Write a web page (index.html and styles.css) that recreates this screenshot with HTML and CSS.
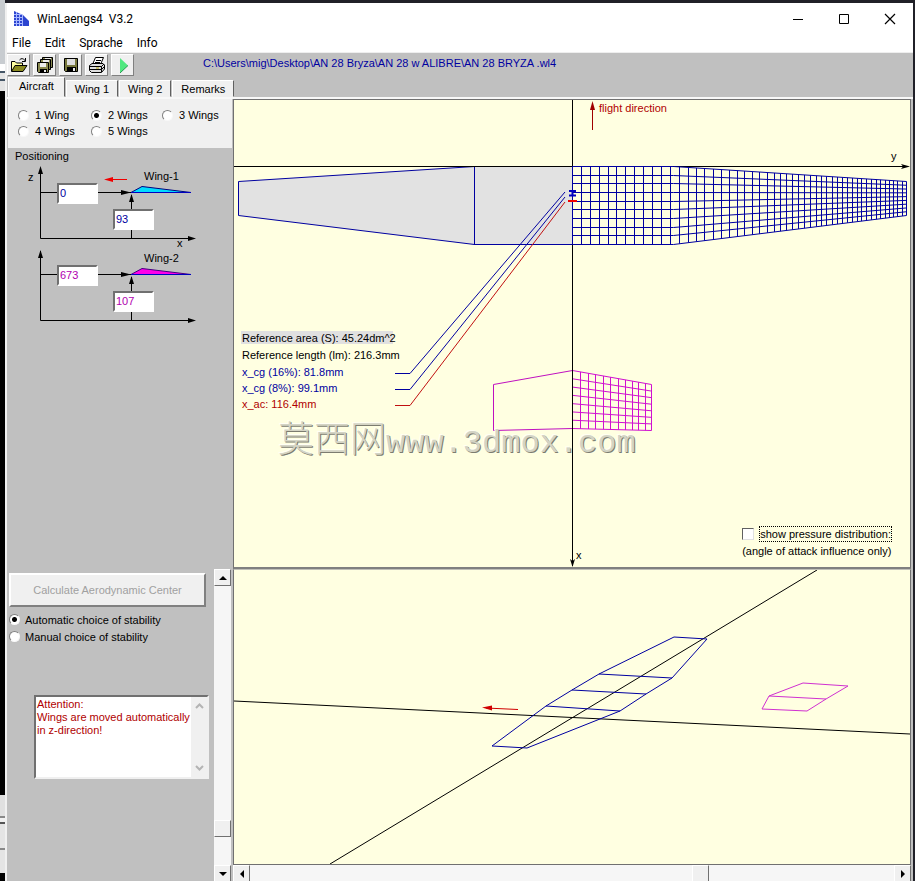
FILE: index.html
```html
<!DOCTYPE html>
<html lang="en">
<head>
<meta charset="utf-8">
<title>WinLaengs4 V3.2</title>
<link rel="stylesheet" href="styles.css">
</head>
<body>
<div class="desktop">
<div class="window">
  <header class="titlebar">
    <svg class="app-icon" width="17" height="16" viewBox="0 0 17 16">
      <clipPath id="wing-shape"><path d="M1 0L10 4L16 10V15H1Z"/></clipPath>
      <g clip-path="url(#wing-shape)" shape-rendering="crispEdges">
        <path d="M0 0H17V16H0Z" fill="#2c44d0"/>
        <path d="M3.500 0V16M6.500 0V16M9.500 0V16M0 3.500H9M0 6.500H10M0 9.500H10M0 12.500H10" stroke="#a8b8ff"/>
      </g>
    </svg>
    <h1>WinLaengs4&nbsp; V3.2</h1>
    <div class="window-buttons">
      <button type="button" aria-label="Minimize"><svg width="12" height="12" viewBox="0 0 12 12"><path d="M1 6.500H11" stroke="#000"/></svg></button>
      <button type="button" aria-label="Maximize"><svg width="12" height="12" viewBox="0 0 12 12"><path d="M1.500 1.500H10.500V10.500H1.500Z" fill="none" stroke="#000"/></svg></button>
      <button type="button" aria-label="Close"><svg width="12" height="12" viewBox="0 0 12 12"><path d="M1 1L11 11M11 1L1 11" stroke="#000" stroke-width="1.200"/></svg></button>
    </div>
  </header>
  <nav class="menubar">
    <button type="button">File</button>
    <button type="button">Edit</button>
    <button type="button">Sprache</button>
    <button type="button">Info</button>
  </nav>
  <div class="toolbar">
    <button type="button" aria-label="Open"><svg width="18" height="18" viewBox="0 0 18 18"><path d="M1.500 15V5.500H5L6.500 7H12.500V9.500" fill="#ffffa0" stroke="#000"/><path d="M1.500 15.500L5 9.500H17L13 15.500Z" fill="#8a8a20" stroke="#000"/><path d="M9.500 4Q12 1 15 4.500M15.500 2V5.500H12" fill="none" stroke="#000"/></svg></button>
    <button type="button" aria-label="Save all"><svg width="18" height="18" viewBox="0 0 18 18"><path d="M6.500 1.500H16.500V11.500H6.500Z" fill="#8a8a50" stroke="#000"/><path d="M9 2H15V5H9Z" fill="#eee"/><path d="M4.500 3.500H14.500V13.500H4.500Z" fill="#8a8a50" stroke="#000"/><path d="M7 4H13V7H7Z" fill="#eee"/><path d="M1.500 6.500H12.500V16.500H2.500L1.500 15.500Z" fill="#8a8a50" stroke="#000"/><path d="M4 7H10V11H4Z" fill="#eee"/><path d="M4 13H11V16H4Z"/><path d="M8 14H10V16H8Z" fill="#eee"/></svg></button>
    <button type="button" aria-label="Save"><svg width="18" height="18" viewBox="0 0 18 18"><path d="M2.500 2.500H15.500V15.500H3.500L2.500 14.500Z" fill="#77773c" stroke="#000"/><path d="M5 3H13V9H5Z" fill="#ddd"/><path d="M5 11H14V15H5Z"/><path d="M11 12H13V15H11Z" fill="#eee"/></svg></button>
    <button type="button" aria-label="Print"><svg width="18" height="18" viewBox="0 0 18 18"><path d="M4.500 8.500L7.500 1.500H15.500L12.500 8.500Z" fill="#fff" stroke="#000"/><path d="M8 4.500H13M7 6.500H12" stroke="#000"/><path d="M1.500 9.500L4 7.500H15L16.500 9V13L13.500 16.500H3.500L1.500 14.500Z" fill="#ddd" stroke="#000"/><path d="M2 10.500H13.500L16 8M2 13.500H13.500V16M13.500 10.500V13.500L16 11" fill="none" stroke="#000"/><path d="M8 12H11" stroke="#b0a000"/></svg></button>
    <button type="button" aria-label="Run"><svg width="18" height="18" viewBox="0 0 18 18"><path d="M6 2V17L14 9.500Z" fill="#50e880"/><path d="M6 17L14 9.500" stroke="#289850"/></svg></button>
    <p class="file-path">C:\Users\mig\Desktop\AN 28 Bryza\AN 28 w ALIBRE\AN 28 BRYZA .wl4</p>
  </div>
  <div class="tabs" role="tablist">
    <button type="button" role="tab" aria-selected="true" class="active">Aircraft</button>
    <button type="button" role="tab" aria-selected="false">Wing 1</button>
    <button type="button" role="tab" aria-selected="false">Wing 2</button>
    <button type="button" role="tab" aria-selected="false">Remarks</button>
  </div>

  <main class="workspace">
    <section class="aircraft">
      <div class="wing-count">
        <label><input type="radio" name="wings">1 Wing</label>
        <label><input type="radio" name="wings" checked>2 Wings</label>
        <label><input type="radio" name="wings">3 Wings</label>
        <label><input type="radio" name="wings">4 Wings</label>
        <label><input type="radio" name="wings">5 Wings</label>
      </div>
      <h2>Positioning</h2>
      <div class="diagram first">
        <svg width="200" height="82" viewBox="8 165 200 82">
          <path d="M40.500 169V238.500H194M40.500 192.500H131M131.500 195V238" fill="none" stroke="#000"/>
          <path d="M40.500 166L43 174H38ZM196 238.500L188 236V241ZM131 192.500L121 190V195ZM131.500 194L134 202H129Z"/>
          <path d="M131 192.500L142 186.500L191 192.500Z" fill="#00dcff" stroke="#000080"/>
          <path d="M131 192.500H191" stroke="#0000c0"/>
          <path d="M110 179.500H127" stroke="#f00000"/><path d="M104 179.500L113 177V182Z" fill="#f00000"/>
          <text x="28" y="181">z</text><text x="144" y="180">Wing-1</text><text x="177" y="247">x</text>
        </svg>
        <input class="pos-x" type="text" value="0" aria-label="Wing-1 x position">
        <input class="pos-z" type="text" value="93" aria-label="Wing-1 z position">
      </div>
      <div class="diagram second">
        <svg width="200" height="82" viewBox="8 165 200 82">
          <path d="M40.500 169V238.500H194M40.500 192.500H131M131.500 195V238" fill="none" stroke="#000"/>
          <path d="M40.500 168L43 176H38ZM196 238.500L188 236V241ZM131 192.500L121 190V195ZM131.500 194L134 202H129Z"/>
          <path d="M131 192.500L142 186.500L191 192.500Z" fill="#ff00e8" stroke="#400080"/>
          <path d="M131 192.500H191" stroke="#0000c0"/>
          <text x="144" y="180">Wing-2</text>
        </svg>
        <input class="pos-x" type="text" value="673" aria-label="Wing-2 x position">
        <input class="pos-z" type="text" value="107" aria-label="Wing-2 z position">
      </div>
    </section>

    <section class="plot plan-view">
      <svg viewBox="234 100 676 467">
        <path d="M238.500 181.500L474.500 166.500H572.500V244.500H474.500L238.500 215.500Z" fill="#e2e2e2" stroke="#0000a0"/>
        <path d="M474.500 166V245" stroke="#0000a0"/>
        <path d="M234 166.500H908M572.500 100V566" stroke="#000"/>
        <path d="M910 166.500L901 164L903 166.500L901 169ZM572.500 567L570 559L572.500 561L575 559Z"/>
        <path id="main-mesh" fill="none" stroke="#0000a0"/>
        <path d="M572.500 370.500L493.500 384.500V430.500L572.500 428.500" fill="none" stroke="#c010c0"/>
        <path id="tail-mesh" fill="none" stroke="#d010d0"/>
        <path d="M572.500 370V430" stroke="#000"/>
        <path d="M395 373.500H410L565 192M395 389.500H410L565 197" fill="none" stroke="#0000a0"/>
        <path d="M395 405.500H410L565 202" fill="none" stroke="#c01010"/>
        <path d="M569 191H576M569 195.500H576M572.500 191V196" stroke="#0000c0" stroke-width="2"/>
        <path d="M568 201H577" stroke="#f00000" stroke-width="2"/>
        <path d="M592.500 104V130" stroke="#a00000"/><path d="M592.500 101L595 110H590Z" fill="#a00000"/>
        <text x="599" y="112" class="red">flight direction</text>
        <text x="891" y="160">y</text><text x="576" y="559">x</text>
        <path d="M241 331H393V344H241Z" fill="#e0e0e0"/>
        <text x="242" y="342">Reference area (S): 45.24dm^2</text>
        <text x="242" y="359">Reference length (lm): 216.3mm</text>
        <text x="242" y="376" class="blue">x_cg (16%): 81.8mm</text>
        <text x="242" y="392" class="blue">x_cg (8%): 99.1mm</text>
        <text x="242" y="408" class="red">x_ac: 116.4mm</text>
        <text x="278" y="452" class="watermark"><tspan class="han">莫西网</tspan><tspan>www.3dmox.com</tspan></text>
      </svg>
      <div class="pressure">
        <label><input type="checkbox"><span>show pressure distribution:</span></label>
        <p>(angle of attack influence only)</p>
      </div>
    </section>

    <section class="stability">
      <div class="stability-body">
        <button type="button" class="calculate" disabled>Calculate Aerodynamic Center</button>
        <label><input type="radio" name="stability" checked>Automatic choice of stability</label>
        <label><input type="radio" name="stability">Manual choice of stability</label>
        <div class="message">
          <textarea aria-label="Message" readonly>Attention:
Wings are moved automatically in z-direction!</textarea>
          <div class="message-scroll">
            <svg width="9" height="6" viewBox="0 0 9 6"><path d="M1 5L4.500 1.500L8 5" fill="none" stroke="#b4b4b4" stroke-width="2"/></svg>
            <svg width="9" height="6" viewBox="0 0 9 6"><path d="M1 1L4.500 4.500L8 1" fill="none" stroke="#b4b4b4" stroke-width="2"/></svg>
          </div>
        </div>
      </div>
      <div class="scrollbar vertical">
        <button type="button" aria-label="Scroll up"><svg width="8" height="4" viewBox="0 0 8 4"><path d="M0 4L4 0L8 4Z"/></svg></button>
        <span class="before"></span><span class="thumb"></span><span class="after"></span>
        <button type="button" aria-label="Scroll down"><svg width="8" height="4" viewBox="0 0 8 4"><path d="M0 0L4 4L8 0Z"/></svg></button>
      </div>
    </section>

    <section class="view-column">
      <div class="plot perspective">
        <svg viewBox="234 570 676 294">
          <path d="M234 701L910 734M330 864L817 570" stroke="#000"/>
          <path d="M492 746L546 706L572 690L599 674L674 637L707 639L672 678L646 694L620 711L527 748ZM546 706L620 711M572 690L646 694M599 674L672 678" fill="none" stroke="#0000a0"/>
          <path d="M769 696L803 683L848 686L826 699L807 711L762 709ZL826 699" fill="none" stroke="#d030d0"/>
          <path d="M486 708L518 709.500" stroke="#d00000"/><path d="M482 707.500L492 705.500V710.500Z" fill="#d00000"/>
        </svg>
      </div>
      <div class="scrollbar horizontal">
        <button type="button" aria-label="Scroll left"><svg width="4" height="8" viewBox="0 0 4 8"><path d="M4 0L0 4L4 8Z"/></svg></button>
        <span class="before"></span><span class="thumb"></span><span class="after"></span>
        <button type="button" aria-label="Scroll right"><svg width="4" height="8" viewBox="0 0 4 8"><path d="M0 0L4 4L0 8Z"/></svg></button>
      </div>
    </section>
  </main>
</div>
</div>
<script src="mesh.js"></script>
</body>
</html>
```
FILE: mesh.js
```js
// Each station is [x, top, bottom]; panels are split into `rows` chordwise strips.
function meshPath(stations, spanwise, rows) {
  function edges(x) {
    for (let i = 1; i < stations.length; i++) {
      const a = stations[i - 1], b = stations[i];
      if (x <= b[0]) {
        const t = (x - a[0]) / (b[0] - a[0]);
        return [a[1] + t * (b[1] - a[1]), a[2] + t * (b[2] - a[2])];
      }
    }
  }
  let d = "";
  spanwise.forEach(function (x) {
    const e = edges(x);
    d += "M" + x + " " + e[0] + "V" + e[1];
  });
  for (let r = 0; r <= rows; r++) {
    stations.forEach(function (s, i) {
      let y = s[1] + (s[2] - s[1]) * r / rows;
      if (i < 2 && stations.length > 2) y = Math.floor(y) + 0.5;
      d += (i ? "L" : "M") + s[0] + " " + y;
    });
  }
  return d;
}

const mainSpan = [572, 581, 590, 599, 608, 616, 625, 634, 643, 652, 661, 670, 679, 688,
  696, 704, 713, 721, 729, 737, 744, 752, 759, 767, 774, 780, 786, 792, 798, 804, 810,
  816, 821, 826, 832, 837, 842, 847, 852, 857, 861, 866, 871, 876, 880, 885, 889, 893,
  897, 902, 906].map(function (x) { return x + 0.5; });
const tailSpan = [580, 588, 595, 603, 610, 618, 625, 632, 638, 645, 651]
  .map(function (x) { return x + 0.5; });

document.getElementById("main-mesh").setAttribute("d",
  meshPath([[572.5, 166.5, 244.5], [673.5, 166.5, 244.5], [906.5, 181.5, 215.5]], mainSpan, 9));
document.getElementById("tail-mesh").setAttribute("d",
  meshPath([[572.5, 370.5, 428.5], [651.5, 384.5, 430.5]], tailSpan, 7));
```
FILE: styles.css
```css
* { box-sizing: border-box; }
html, body { height: 100%; margin: 0; }
body {
  font: 11px/16px "Liberation Sans", sans-serif;
  color: #000;
  background: #c0c0c0;
}
h1, h2, p { margin: 0; font-size: inherit; font-weight: normal; }
button, input, textarea { font: inherit; color: inherit; margin: 0; border-radius: 0; }
svg { display: block; }
text { font-size: 11px; }
.blue { fill: #0000a0; }
.red { fill: #b00000; }

.desktop {
  min-height: 100vh;
  display: flex;
  padding: 3px 2px 0 5px;
  background:
    linear-gradient(#c8ccd0 0 64px, #fff 64px 71px, #456 71px 73px, #e4e4e4 73px 79px, #456 79px 81px, #e4e4e4 81px 91px, #000 91px 795px, #e0e0e0 795px 816px, #888 816px 818px, #f0f0f0 818px 822px, #555 822px 824px, #e4e4e4 824px 848px, #888 848px 850px, #e4e4e4 850px 873px, #000 873px) left / 5px 100% no-repeat,
    #202028;
}
.window {
  flex: 1;
  min-width: 0;
  display: flex;
  flex-direction: column;
  background: #c0c0c0;
  border-left: 2px solid #f0f0f0;
}

.titlebar, .menubar {
  background: #fff;
  font: 12px/16px Roboto, sans-serif;
  display: flex;
}
.titlebar { height: 31px; align-items: center; padding-left: 6px; gap: 7px; }
.window-buttons { margin-left: auto; display: flex; }
.window-buttons button {
  width: 46px; height: 28px;
  display: grid; place-items: center;
  border: 0; padding: 0; background: none;
}
.menubar { height: 19px; padding-left: 5px; gap: 14px; border-bottom: 1px solid #eee; }
.menubar button { border: 0; padding: 0; background: none; line-height: 18px; }

.toolbar { display: flex; height: 24px; gap: 3px; align-items: center; }
.toolbar button {
  width: 23px; height: 22px;
  display: grid; place-items: center;
  padding: 0;
  background: #f0f0f0;
  border: 1px solid;
  border-color: #fff #808080 #808080 #fff;
}
.file-path { color: #0000a0; margin-left: 66px; padding-bottom: 4px; }

.tabs { display: flex; height: 22px; align-items: flex-end; padding-left: 1px; border-bottom: 2px solid #f8f8f8; }
.tabs button {
  height: 17px;
  padding: 0 8px;
  margin-right: 1px;
  line-height: 16px;
  background: #f0f0f0;
  border: 1px solid;
  border-color: #fff #606060 #f0f0f0 #fff;
}
.tabs .active { height: 20px; padding: 0 10px 4px; }

.workspace {
  flex: 1;
  display: grid;
  grid-template-columns: 226px minmax(0, 1fr);
  grid-template-rows: auto 1fr;
  padding-right: 2px;
}
input[type="radio"] {
  appearance: none;
  width: 11px; height: 11px;
  border: 1px solid;
  border-color: #808080 #f8f8f8 #f8f8f8 #808080;
  border-radius: 50%;
  background: #fff;
}
input[type="radio"]:checked { background: radial-gradient(circle, #000 0 2px, #fff 3px); }

.wing-count {
  margin: 0 1px;
  height: 49px;
  padding: 8px 0 0 10px;
  display: grid;
  grid-template-columns: 73px 71px 1fr;
  grid-auto-rows: 16px;
  background: #f0f0f0;
}
label { display: flex; align-items: center; gap: 6px; white-space: nowrap; }
.aircraft h2 { padding-left: 8px; height: 17px; line-height: 16px; }
.diagram { position: relative; margin-left: 1px; width: 200px; }
.diagram svg { overflow: visible; }
.diagram input {
  position: absolute;
  width: 41px; height: 21px;
  padding: 0 1px 2px;
  background: #fff;
  border: 2px solid;
  border-color: #707070 #fff #fff #707070;
}
.diagram .pos-x { left: 49px; top: 18px; }
.diagram .pos-z { left: 105px; top: 44px; }
.first input { color: #0000a0; }
.second input { color: #b000b0; }

.plot {
  background: #ffffe1;
  border: 1px solid #707070;
}
.plan-view { position: relative; border-bottom: 2px solid #808080; }
.plan-view svg { width: 100%; }
.watermark {
  font: 32px "Liberation Mono", monospace;
  fill: #d4d4c4;
  text-shadow: 1px 1px 0 #7c7c70, -1px -1px 0 #fffff4;
}
.watermark .han { font: 300 36px "Noto Sans CJK SC", sans-serif; }
.pressure { position: absolute; right: 18px; bottom: 8px; }
.pressure label { height: 18px; gap: 5px; }
.pressure span { border: 1px dotted #000; line-height: 14px; }
.pressure input {
  appearance: none;
  width: 12px; height: 12px;
  background: #fff;
  border: 1px solid;
  border-color: #606060 #e0e0e0 #e0e0e0 #606060;
}

.stability { display: flex; }
.stability-body { flex: 1; min-width: 0; padding: 4px 0 0 2px; }
.calculate {
  display: block;
  width: calc(100% - 8px); height: 34px;
  margin-bottom: 4px;
  background: #f0f0f0;
  border: 2px solid;
  border-color: #fff #808080 #808080 #fff;
}
.calculate:disabled { color: #a0a0a0; }
.stability-body label { height: 17px; gap: 5px; }
.message {
  display: flex;
  width: 175px; height: 84px;
  margin: 50px 0 0 25px;
  background: #fff;
  border: 2px solid;
  border-color: #707070 #f0f0f0 #f0f0f0 #707070;
}
.message textarea {
  flex: 1;
  min-width: 0;
  padding: 1px 1px 0;
  border: 0;
  resize: none;
  overflow: hidden;
  background: none;
  color: #b00000;
  line-height: 13px;
}
.message-scroll {
  width: 16px;
  background: #f0f0f0;
  display: flex; flex-direction: column;
  justify-content: space-between;
  align-items: center;
  padding: 6px 0;
}

.view-column { display: flex; flex-direction: column; min-height: 0; }
.perspective { flex: 1; border-top-color: #c0c0b8; }
.perspective svg { width: 100%; height: 100%; }

.scrollbar { display: flex; background: #f6f6f6; }
.scrollbar button, .thumb {
  width: 17px; height: 17px;
  flex: none;
  display: grid; place-items: center;
  padding: 0;
  background: #f0f0f0;
  border: 1px solid;
  border-color: #fff #707070 #707070 #fff;
}
.vertical { flex-direction: column; margin-right: 2px; }
.vertical .before { flex: 232; }
.vertical .after { flex: 28; }
.horizontal .before { flex: 443; }
.horizontal .after { flex: 185; }
```
